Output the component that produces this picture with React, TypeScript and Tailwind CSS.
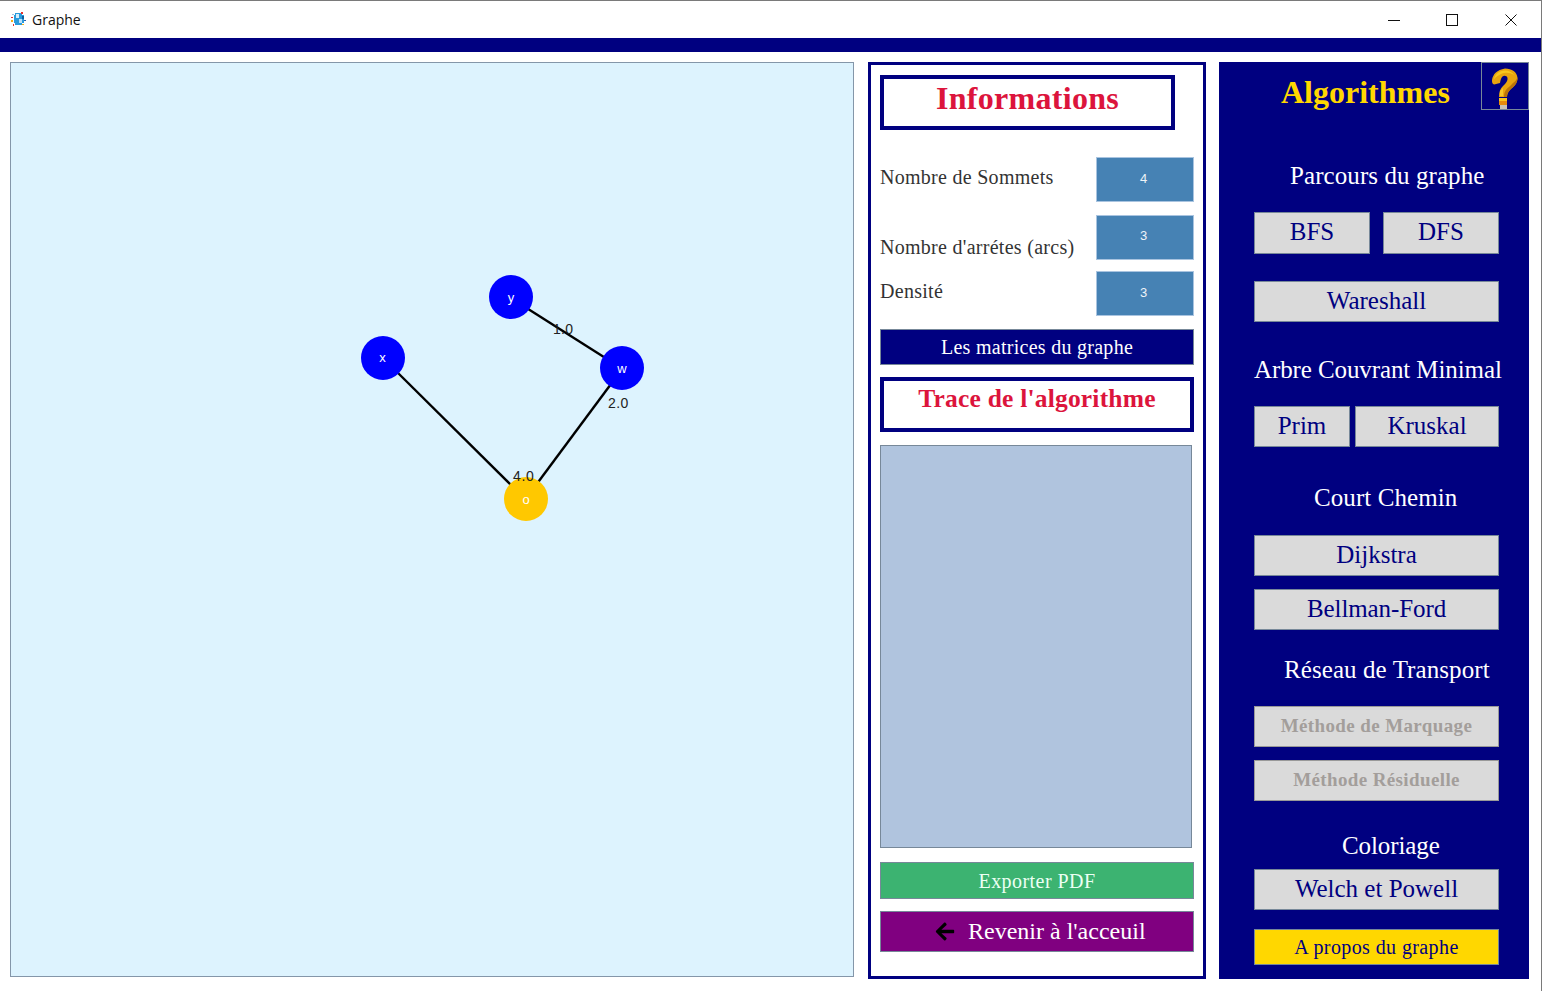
import React from 'react';
import { FaArrowLeft } from 'react-icons/fa';

const serif = "font-['Liberation_Serif','Times_New_Roman',serif]";

const AppIcon = () => (
  <svg width="16" height="15" viewBox="0 0 16 15" className="ml-[10px] mt-[-1px] shrink-0" shapeRendering="crispEdges">
    <rect x="5" y="1" width="7" height="12" fill="#2a9bdc" />
    <rect x="4" y="3" width="10" height="8" fill="#2a9bdc" />
    <rect x="6" y="2" width="3" height="4" fill="#d8ecf8" />
    <rect x="9" y="7" width="3" height="4" fill="#bfe0f5" />
    <rect x="12" y="4" width="2" height="3" fill="#0f5f9e" />
    <rect x="2" y="2" width="2" height="1" fill="#9fc3de" />
    <rect x="1" y="5" width="2" height="1" fill="#e5322d" />
    <rect x="1" y="8" width="2" height="2" fill="#f2b01e" />
    <rect x="3" y="12" width="1" height="2" fill="#e5322d" />
    <rect x="11" y="0" width="2" height="2" fill="#e5322d" />
    <rect x="14" y="8" width="2" height="1" fill="#2a5fb0" />
    <rect x="12" y="12" width="2" height="1" fill="#f2b01e" />
  </svg>
);

const WindowControls = () => (
  <div className="flex items-center ml-auto">
    <svg width="12" height="12" viewBox="0 0 12 12" className="mr-[46px]">
      <path d="M0 6.5 H12" stroke="#111" strokeWidth="1" />
    </svg>
    <svg width="12" height="12" viewBox="0 0 12 12" className="mr-[47px]">
      <rect x="0.5" y="0.5" width="11" height="11" fill="none" stroke="#111" strokeWidth="1" />
    </svg>
    <svg width="12" height="12" viewBox="0 0 12 12" className="mr-[24px]">
      <path d="M0.5 0.5 L11.5 11.5 M11.5 0.5 L0.5 11.5" stroke="#111" strokeWidth="1" />
    </svg>
  </div>
);

const QuestionMark = () => (
  <svg width="27" height="42" viewBox="0 0 27 42">
    <path
      d="M1 12 C2 6 6 2 14 0.5 C21 0.5 26 4 26.5 10 C26.5 16 22 19 19 22 C17 24 16 26 16 29 L8 29 C8 24 9 21 12 18 C15 15 17 13 16.5 10 C16 7.5 13 7 11.5 8.5 C10 10 9.5 12 9 15 L3 16.5 C1 16 1 14 1 12 Z"
      fill="#e9a50f"
    />
    <path d="M3 11 C4 6 8 3 14 2.5 C18 2.5 21 4 23 7 C19 4.5 14 4 10 6 C7 7.5 5 9 3 11 Z" fill="#f9c81e" />
    <path d="M22 15 C25 13 26 11 26.5 9 C27 16 22 19 19 22 C17 24 16 26 16 29 L13 29 C13 24 15 21 18 19 C20 17 21 16 22 15 Z" fill="#bb7409" />
    <path d="M9 23 L12 20 L12 28 L9 28 Z" fill="#f7c62a" />
    <rect x="8" y="30" width="8" height="3" fill="#f8c51c" />
    <rect x="8" y="33" width="8" height="4" fill="#e58a0c" />
    <rect x="9" y="37" width="7" height="4" fill="#c8c3b6" />
  </svg>
);

const GraphCanvas = () => (
  <div className="relative w-[844px] h-[915px] shrink-0 bg-[#ddf3fe] border border-[#8496a9]">
    <svg className="absolute inset-0 w-full h-full" viewBox="0 0 842 913">
      <g stroke="#000" strokeWidth="2.4">
        <line x1="514" y1="244" x2="596" y2="296" />
        <line x1="385" y1="308" x2="501" y2="423" />
        <line x1="600" y1="321" x2="525" y2="422" />
      </g>
    </svg>
    <div className="absolute left-[478px] top-[212px] w-[44px] h-[44px] pt-[1px] rounded-full bg-[#0000ff] flex items-center justify-center text-white text-[13px] font-['Liberation_Sans',sans-serif]">y</div>
    <div className="absolute left-[350px] top-[273px] w-[44px] h-[44px] pr-[1px] rounded-full bg-[#0000ff] flex items-center justify-center text-white text-[13px] font-['Liberation_Sans',sans-serif]">x</div>
    <div className="absolute left-[589px] top-[283px] w-[44px] h-[44px] pt-[1px] rounded-full bg-[#0000ff] flex items-center justify-center text-white text-[13px] font-['Liberation_Sans',sans-serif]">w</div>
    <div className="absolute left-[493px] top-[414px] w-[44px] h-[44px] pt-[1px] rounded-full bg-[#ffc800] flex items-center justify-center text-white text-[13px] font-['Liberation_Sans',sans-serif]">o</div>
    <span className="absolute left-[542px] top-[257px] text-[14px] leading-[18px] tracking-[0.3px] font-light text-[#222] font-['Liberation_Sans',sans-serif]">1.0</span>
    <span className="absolute left-[597px] top-[331px] text-[14px] leading-[18px] tracking-[0.4px] font-light text-[#222] font-['Liberation_Sans',sans-serif]">2.0</span>
    <span className="absolute left-[502px] top-[404px] text-[14px] leading-[18px] tracking-[0.6px] font-light text-[#222] font-['Liberation_Sans',sans-serif]">4.0</span>
  </div>
);

const StatRow = ({ label, value, className, labelClass, valueClass }: { label: string; value: string; className: string; labelClass: string; valueClass: string }) => (
  <div className={`flex justify-between h-[45px] ${className}`}>
    <span className={`text-[20px] leading-[24px] tracking-[0.28px] text-[#333] whitespace-nowrap ${labelClass}`}>{label}</span>
    <div className={`w-[98px] h-full flex justify-center bg-[#4682b4] border border-[#a9c4e0] text-[13px] leading-[16px] text-[#eef3f8] font-['Liberation_Sans',sans-serif] ${valueClass}`}>
      <span className="mr-[3px]">{value}</span>
    </div>
  </div>
);

const InfoPanel = () => (
  <div className={`w-[338px] h-[917px] ml-[14px] shrink-0 border-[3px] border-[#000080] bg-white px-[9px] pt-[10px] flex flex-col ${serif}`}>
    <div className="w-[295px] h-[55px] border-[4px] border-[#000080] flex justify-center text-[32px] leading-[38px] font-bold tracking-[0.3px] text-[#dc143c]">
      Informations
    </div>
    <StatRow label="Nombre de Sommets" value="4" className="mt-[27px]" labelClass="mt-[8px]" valueClass="pt-[13px]" />
    <StatRow label="Nombre d'arrétes (arcs)" value="3" className="mt-[13px]" labelClass="mt-[20px]" valueClass="pt-[12px]" />
    <StatRow label="Densité" value="3" className="mt-[11px]" labelClass="mt-[8px]" valueClass="pt-[13px]" />
    <div className="h-[36px] mt-[13px] bg-[#000080] border border-[#778899] flex items-center justify-center text-[20px] tracking-[0.28px] text-white">
      Les matrices du graphe
    </div>
    <div className="h-[55px] mt-[12px] border-[4px] border-[#000080] flex justify-center text-[25.5px] leading-[36px] font-bold tracking-[0.2px] text-[#dc143c]">
      Trace de l'algorithme
    </div>
    <div className="w-[312px] h-[403px] mt-[13px] bg-[#b0c4de] border border-[#778899]" />
    <div className="h-[37px] mt-[14px] bg-[#3cb371] border border-[#778899] flex items-center justify-center text-[20px] tracking-[0.45px] text-[#ecfff4]">
      Exporter PDF
    </div>
    <div className="h-[41px] mt-[12px] pb-[2px] bg-[#800080] border border-[#778899] flex items-center pl-[52px] text-[24px] text-white">
      <FaArrowLeft className="w-[24px] h-[21px] text-black mr-[11px] mt-[2px]" />
      Revenir à l'acceuil
    </div>
  </div>
);

const Heading = ({ children, className }: { children: React.ReactNode; className: string }) => (
  <div className={`h-[32px] flex items-center whitespace-nowrap text-[25px] tracking-[0.08px] text-white ${className}`}>{children}</div>
);

const AlgoButton = ({ children, className }: { children: React.ReactNode; className: string }) => (
  <div className={`h-[41px] pb-[2px] flex items-center justify-center whitespace-nowrap bg-[#dadada] border border-[#778899] text-[25px] text-[#000080] ${className}`}>
    {children}
  </div>
);

const AlgoPanel = () => (
  <div className={`w-[310px] h-[917px] ml-[13px] shrink-0 bg-[#000080] pl-[35px] pr-[30px] flex flex-col ${serif}`}>
    <div className="flex h-[48px] -ml-[35px] -mr-[30px]">
      <div className="pl-[62px] text-[32px] leading-[60px] font-bold text-[#ffd700]">Algorithmes</div>
      <div className="ml-auto w-[48px] h-[48px] border border-[#778899] pl-[9px] pt-[5px]">
        <QuestionMark />
      </div>
    </div>
    <Heading className="mt-[50px] pl-[36px]">Parcours du graphe</Heading>
    <div className="flex justify-between mt-[20px]">
      <AlgoButton className="w-[116px] !h-[42px]">BFS</AlgoButton>
      <AlgoButton className="w-[116px] !h-[42px]">DFS</AlgoButton>
    </div>
    <AlgoButton className="mt-[27px]">Wareshall</AlgoButton>
    <Heading className="mt-[31px] pt-[1px] !tracking-[-0.1px]">Arbre Couvrant Minimal</Heading>
    <div className="flex justify-between mt-[21px]">
      <AlgoButton className="w-[96px]">Prim</AlgoButton>
      <AlgoButton className="w-[144px]">Kruskal</AlgoButton>
    </div>
    <Heading className="mt-[35px] pl-[60px]">Court Chemin</Heading>
    <AlgoButton className="mt-[21px]">Dijkstra</AlgoButton>
    <AlgoButton className="mt-[13px] tracking-[-0.1px]">Bellman-Ford</AlgoButton>
    <Heading className="mt-[24px] pl-[30px]">Réseau de Transport</Heading>
    <AlgoButton className="mt-[20px] !pb-0 !text-[19px] tracking-[0.38px] font-bold !text-[#a39e9b] !border-[#999]">Méthode de Marquage</AlgoButton>
    <AlgoButton className="mt-[13px] !pb-0 !text-[19px] tracking-[0.38px] font-bold !text-[#a39e9b] !border-[#999]">Méthode Résiduelle</AlgoButton>
    <Heading className="mt-[29px] pl-[88px] !tracking-[-0.1px]">Coloriage</Heading>
    <AlgoButton className="mt-[7px]">Welch et Powell</AlgoButton>
    <AlgoButton className="mt-[19px] !h-[36px] !pb-0 !bg-[#ffd700] !text-[20px] tracking-[0.4px]">A propos du graphe</AlgoButton>
  </div>
);

export default function App() {
  return (
    <div className="w-[1542px] h-[991px] bg-white border-t border-r border-[#7a7a7a] overflow-hidden">
      <div className="h-[37px] flex items-center">
        <AppIcon />
        <span className="ml-[6px] text-[14px] text-[#111] font-['Open_Sans',sans-serif]">Graphe</span>
        <WindowControls />
      </div>
      <div className="h-[14px] bg-[#000080]" />
      <div className="flex pl-[10px] pt-[10px]">
        <GraphCanvas />
        <InfoPanel />
        <AlgoPanel />
      </div>
    </div>
  );
}
